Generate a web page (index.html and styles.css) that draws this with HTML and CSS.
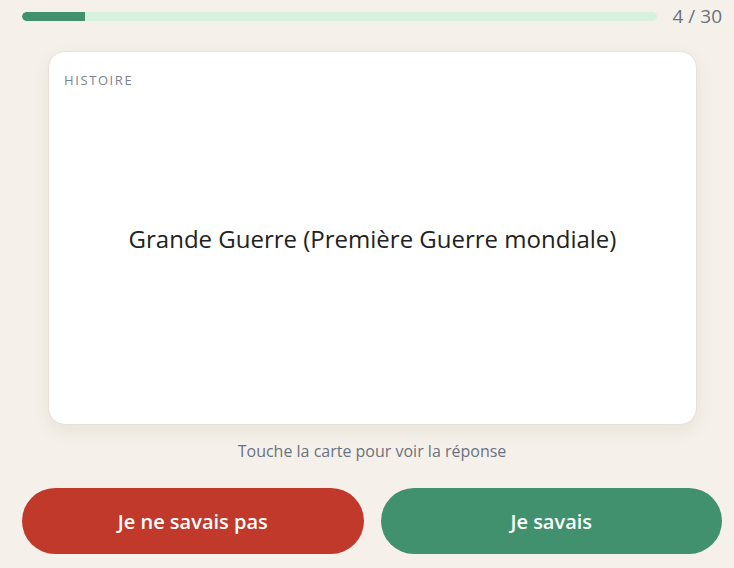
FILE: index.html
```html
<!DOCTYPE html>
<html lang="fr">
<head>
<meta charset="utf-8">
<link rel="stylesheet" href="styles.css">
</head>
<body>
<div class="page">
  <div class="top">
    <div class="track"><div class="fill" style="width:10%"></div></div>
    <div class="count">4 / 30</div>
  </div>
  <div class="card">
    <div class="cat">HISTOIRE</div>
    <div class="term">Grande Guerre (Première Guerre mondiale)</div>
  </div>
  <div class="hint">Touche la carte pour voir la réponse</div>
  <div class="actions">
    <button class="btn no">Je ne savais pas</button>
    <button class="btn yes">Je savais</button>
  </div>
</div>
</body>
</html>
```
FILE: styles.css
```css
* { box-sizing: border-box; }
html, body { margin: 0; padding: 0; }
body {
  background: #f5f1ea;
  font-family: "Open Sans", "Noto Sans", sans-serif;
  width: 734px;
  height: 568px;
  overflow: hidden;
}
.page {
  padding: 4px 12px 0 22px;
  display: flex;
  flex-direction: column;
}
.top {
  display: flex;
  align-items: center;
  gap: 16px;
  height: 24px;
}
.track {
  flex: 1;
  height: 9px;
  background: #d6f2dc;
  border-radius: 5px;
  overflow: hidden;
}
.fill {
  height: 100%;
  background: #41906e;
  border-radius: 5px 0 0 5px;
}
.count {
  font-size: 19px;
  color: #6b7280;
  line-height: 24px;
}
.card {
  margin: 23px 25px 0 26px;
  height: 374px;
  background: #fff;
  border: 1px solid #e6e1d8;
  border-radius: 17px;
  box-shadow: 0 6px 18px rgba(60, 50, 30, 0.08);
  position: relative;
  display: flex;
  align-items: center;
  justify-content: center;
}
.cat {
  position: absolute;
  left: 15px;
  top: 19px;
  font-size: 13px;
  letter-spacing: 1.6px;
  color: #7b8190;
}
.term {
  font-size: 24px;
  color: #222;
  margin-top: 0;
}
.hint {
  text-align: center;
  font-size: 16px;
  color: #6b7280;
  margin-top: 15px;
  line-height: 22px;
}
.actions {
  display: flex;
  gap: 17px;
  margin-top: 26px;
}
.btn {
  flex: 1;
  height: 66px;
  border: none;
  border-radius: 33px;
  color: #fff;
  font-family: "Open Sans", sans-serif;
  font-weight: 600;
  font-size: 20px;
}
.no { background: #c0392b; }
.yes { background: #41906e; }
```
